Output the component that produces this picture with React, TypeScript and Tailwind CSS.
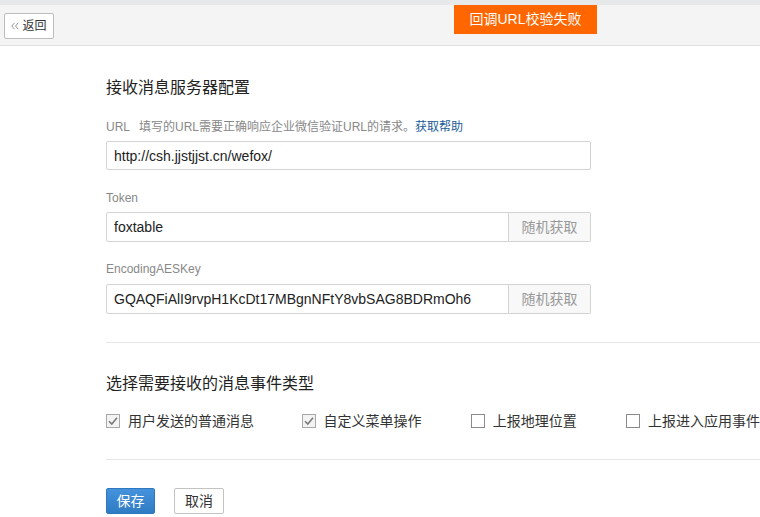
import { useState } from 'react'

const cjk = '[font-family:"Liberation_Sans","Noto_Sans_CJK_SC",sans-serif]'

function CheckBox({ checked, label }: { checked: boolean; label: string }) {
  return (
    <label className="flex items-center h-5 text-[14px] text-[#333]">
      <svg width="14" height="14" viewBox="0 0 14 14" className="mr-[8px]">
        <rect x="0.5" y="0.5" width="13" height="13" fill={checked ? '#f3f3f3' : '#fff'} stroke={checked ? '#a8a8a8' : '#8a8a8a'} />
        {checked && <path d="M3 7.2 L5.8 10 L11 3.8" fill="none" stroke="#7a7a7a" strokeWidth="1.6" />}
      </svg>
      {label}
    </label>
  )
}

export default function App() {
  const [token] = useState('foxtable')
  const [aesKey] = useState('GQAQFiAlI9rvpH1KcDt17MBgnNFtY8vbSAG8BDRmOh6')

  return (
    <div className={`w-[760px] h-[517px] overflow-hidden bg-white relative ${cjk}`}>
      <div className="h-[5px] bg-[#e7e8ea]" />
      <div className="h-[41px] bg-[#f4f4f4] border-b border-[#dedede] flex items-center pl-[4px]">
        <button className="h-[26px] w-[50px] mt-[1px] bg-white border border-[#bcbcbc] rounded-[2px] flex items-center justify-center gap-[3px] text-[12px] text-[#333]">
          <svg width="8" height="8" viewBox="0 0 8 8">
            <path d="M3.5 0.8 L0.8 4 L3.5 7.2 M7.2 0.8 L4.5 4 L7.2 7.2" fill="none" stroke="#888" strokeWidth="0.9" />
          </svg>
          返回
        </button>
      </div>

      <div className="absolute left-[454px] top-[5px] w-[143px] h-[29px] bg-[#ff6600] text-white text-[14px] flex items-center justify-center">
        回调URL校验失败
      </div>

      <div className="pl-[106px] pt-[32px]">
        <h2 className="text-[16px] leading-[20px] text-[#222]">接收消息服务器配置</h2>

        <div className="mt-[21px] text-[12px] leading-[16px] text-[#888]">
          URL<span className="ml-[9px]">填写的URL需要正确响应企业微信验证URL的请求。</span>
          <a className="text-[#1b5c99]">获取帮助</a>
        </div>
        <input
          readOnly
          value="http://csh.jjstjjst.cn/wefox/"
          className="mt-[6px] block w-[485px] h-[29px] border border-[#d3d3d3] rounded-[2px] px-[7px] text-[14px] text-[#222] outline-none"
        />

        <div className="mt-[20px] text-[12px] leading-[16px] text-[#888]">Token</div>
        <div className="mt-[6px] flex w-[485px] h-[30px]">
          <input
            readOnly
            value={token}
            className="flex-1 min-w-0 border border-[#d3d3d3] rounded-l-[2px] px-[7px] text-[14px] text-[#222] outline-none"
          />
          <button className="w-[82px] border border-l-0 border-[#d3d3d3] rounded-r-[2px] bg-[#f8f8f8] text-[14px] text-[#999]">随机获取</button>
        </div>

        <div className="mt-[19px] text-[12px] leading-[16px] text-[#888]">EncodingAESKey</div>
        <div className="mt-[7px] flex w-[485px] h-[30px]">
          <input
            readOnly
            value={aesKey}
            className="flex-1 min-w-0 border border-[#d3d3d3] rounded-l-[2px] px-[7px] text-[14px] text-[#222] outline-none"
          />
          <button className="w-[82px] border border-l-0 border-[#d3d3d3] rounded-r-[2px] bg-[#f8f8f8] text-[14px] text-[#999]">随机获取</button>
        </div>

        <div className="mt-[28px] border-t border-[#e6e6e6]" />

        <h2 className="mt-[31px] text-[16px] leading-[20px] text-[#222]">选择需要接收的消息事件类型</h2>

        <div className="mt-[17px] flex whitespace-nowrap">
          <div className="w-[199px]"><CheckBox checked label="用户发送的普通消息" /></div>
          <div className="w-[172px]"><CheckBox checked label="自定义菜单操作" /></div>
          <div className="w-[158px]"><CheckBox checked={false} label="上报地理位置" /></div>
          <div><CheckBox checked={false} label="上报进入应用事件" /></div>
        </div>

        <div className="mt-[28px] border-t border-[#e6e6e6]" />

        <div className="mt-[28px] flex gap-[19px]">
          <button className="w-[49px] h-[26px] rounded-[2px] border border-[#2f78c0] bg-gradient-to-b from-[#4593dd] to-[#2f7bc4] text-white text-[14px]">保存</button>
          <button className="w-[50px] h-[26px] rounded-[2px] border border-[#c2c2c2] bg-white text-[#333] text-[14px]">取消</button>
        </div>
      </div>
    </div>
  )
}
